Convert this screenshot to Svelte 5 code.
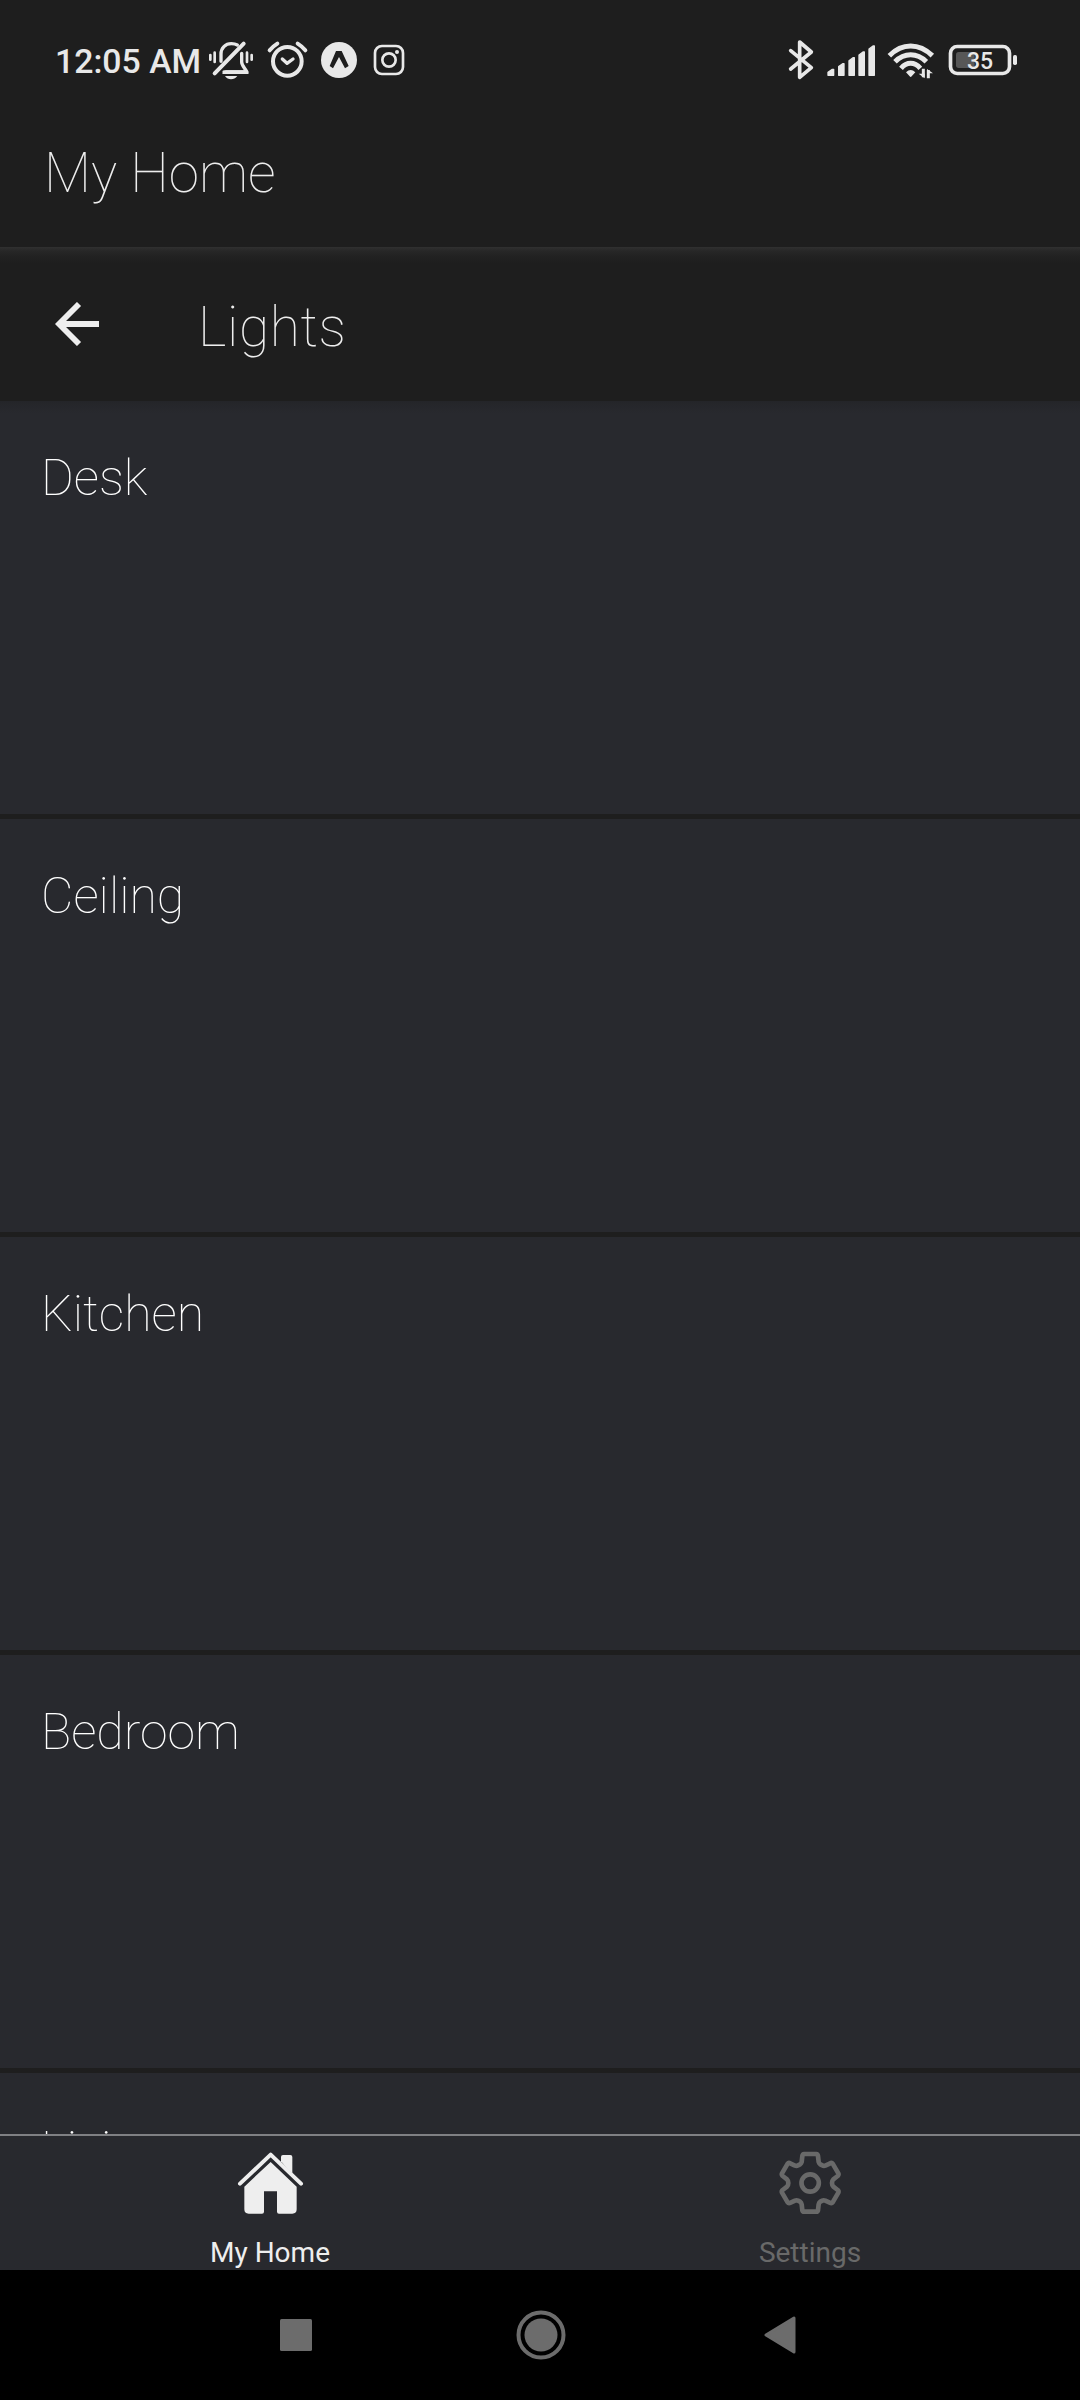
<script>
  const rooms = ['Desk', 'Ceiling', 'Kitchen', 'Bedroom', 'Living'];
</script>

<div class="screen">
  <div class="status">
    <span class="time">12:05 AM</span>
    <svg width="53" height="42" viewBox="501 60 159 126" fill="none" stroke="#e8e8e8" stroke-width="10" stroke-linecap="round">
      <path d="M511 105V119M524 98V126M635 105V119M621 98V126" stroke-width="8" />
      <path d="M524 160L611 71" stroke-width="12" />
      <path d="M543 124V102C543 84 556 71 574 71Q585 71 592 75" />
      <path d="M605 100V126C605 136 613 142 621 156H552" stroke-linejoin="round" />
      <path d="M546 162L557 151H622L626 162Z" fill="#e8e8e8" stroke="none" />
      <path d="M555 168H592Q584 178 573 178Q562 178 555 168Z" fill="#e8e8e8" stroke="none" />
    </svg>
    <svg width="54" height="42" viewBox="660 60 162 126" fill="none" stroke="#e8e8e8" stroke-width="12" stroke-linecap="round" stroke-linejoin="round">
      <circle cx="742" cy="124" r="43" />
      <path d="M727 117L741 130L759 117" stroke-width="10" />
      <path d="M689 91Q699 79 712 71M773 71Q786 79 796 91" />
    </svg>
    <svg width="50" height="42" viewBox="822 60 150 126" fill="none">
      <circle cx="897" cy="120" r="54" fill="#e8e8e8" />
      <path d="M888 93H905L926 138L915 145L897 111L879 145L869 138Z" fill="#1e1e1e" />
    </svg>
    <svg width="50" height="42" viewBox="972 60 150 126" fill="none" stroke="#e8e8e8">
      <rect x="1005" y="78" width="84" height="84" rx="21" stroke-width="8" />
      <circle cx="1047" cy="120" r="20" stroke-width="8" />
      <circle cx="1071" cy="96" r="6" fill="#e8e8e8" stroke="none" />
    </svg>
    <span class="spacer"></span>
    <svg width="35" height="42" viewBox="45 60 105 126" fill="none" stroke="#e8e8e8" stroke-width="11" stroke-linecap="round" stroke-linejoin="round">
      <path d="M62 92L124 143L89 172V66L124 96L62 147" />
    </svg>
    <svg width="60" height="42" viewBox="150 60 180 126" fill="#e8e8e8" stroke="#e8e8e8" stroke-width="4" stroke-linejoin="round">
      <path d="M174 166V157L187 148H191V166ZM206 166V140L219 131H222V166ZM237 166V122L249 113H253V166ZM267 166V105L279 96H283V166ZM297 166V87L309 78H313V166Z" />
    </svg>
    <svg width="60" height="42" viewBox="330 60 180 126" fill="none" stroke="#e8e8e8" stroke-width="15">
      <path d="M358 107Q387 78 422 78T487 107M375 125Q396 104 422 104T469 125M393 145Q406 130 422 130T451 145" />
      <path d="M408 157Q422 143 436 157L425 169Q422 173 419 169Z" fill="#e8e8e8" stroke="none" />
      <path d="M460 146V172M475 175V150" stroke-width="9" />
      <path d="M446 161L464 175V161ZM471 147V160H489Z" fill="#e8e8e8" stroke="none" />
    </svg>
    <svg width="80" height="42" viewBox="510 60 240 126">
      <rect x="541.500" y="79.500" width="177" height="81" rx="20" fill="none" stroke="#e8e8e8" stroke-width="11" />
      <path d="M566 96H614V144H566Q558 144 558 136V104Q558 96 566 96Z" fill="#575757" />
      <rect x="729" y="105" width="12" height="30" rx="5" fill="#e8e8e8" />
      <text class="charge" x="630" y="147" text-anchor="middle">35</text>
    </svg>
  </div>

  <header class="title">My Home</header>

  <div class="subheader">
    <svg width="44" height="44" viewBox="0 0 44 44" fill="none" stroke="#eee" stroke-width="5.800">
      <path d="M44 22H5M24 2L4 22L24 42" />
    </svg>
    <span>Lights</span>
  </div>

  <main class="rooms">
    {#each rooms as room}
      <section class="room">{room}</section>
    {/each}
  </main>

  <nav class="tabs">
    <div class="tab active">
      <svg width="68" height="64" viewBox="708 300 204 192">
        <path d="M720 401L812 314L903 401" fill="none" stroke="#eee" stroke-width="12" stroke-linecap="round" stroke-linejoin="round" />
        <path d="M843 334V321Q843 315 849 315H871Q877 315 877 321V369L865 360Z" fill="#eee" />
        <path d="M812 336L890 410V478Q890 491 877 491H837Q831 491 831 485V424H792V485Q792 491 786 491H746Q733 491 733 478V410Z" fill="#eee" />
      </svg>
      <span>My Home</span>
    </div>
    <div class="tab">
      <svg width="64" height="64" viewBox="235 120 192 192" fill="none" stroke="#696969" stroke-width="14" stroke-linejoin="round">
        <circle cx="331.500" cy="219" r="26" />
        <path d="M313 132H350Q354 132 355 138L357 156Q358 160 362 163L368 166Q372 169 377 167L390 161Q396 157 399 161L416 190Q418 194 414 198L401 208Q397 212 397 219T401 230L414 240Q418 244 416 248L399 277Q396 281 390 278L377 272Q372 270 368 272L362 275Q358 278 357 283L355 301Q354 305 350 305H313Q309 305 308 301L306 283Q305 278 301 275L295 272Q291 270 286 272L273 278Q267 281 264 277L247 248Q245 244 249 240L262 230Q266 226 266 219T262 208L249 198Q245 194 247 190L264 161Q267 157 273 161L286 167Q291 169 295 166L301 163Q305 160 306 156L308 138Q309 132 313 132Z" />
      </svg>
      <span>Settings</span>
    </div>
  </nav>

  <footer class="system">
    <svg width="32" height="50" viewBox="0 0 32 50"><rect y="9" width="32" height="32" rx="1.500" fill="#6c6c6c" /></svg>
    <svg width="50" height="50" viewBox="0 0 50 50">
      <circle cx="25" cy="25" r="22.500" fill="none" stroke="#6c6c6c" stroke-width="4" />
      <circle cx="25" cy="25" r="16.500" fill="#6c6c6c" />
    </svg>
    <svg width="32" height="50" viewBox="0 0 32 50"><path d="M2 25L30 8V42Z" fill="#6c6c6c" stroke="#6c6c6c" stroke-width="3" stroke-linejoin="round" /></svg>
  </footer>
</div>

<style>
  :global(body) {
    margin: 0;
    background: #000;
  }
  .screen {
    width: 1080px;
    height: 2400px;
    display: flex;
    flex-direction: column;
    overflow: hidden;
    background: #1e1e1e;
    color: #eee;
    font-family: Roboto, sans-serif;
  }
  svg {
    display: block;
    flex: none;
  }
  .status {
    flex: none;
    height: 122px;
    box-sizing: border-box;
    padding: 0 60px 0 55px;
    display: flex;
    align-items: center;
  }
  .time {
    width: 152px;
    font-size: 33.8px;
    font-weight: 500;
    white-space: nowrap;
    color: #e8e8e8;
  }
  .spacer {
    flex: 1;
  }
  .charge {
    font-size: 69px;
    font-weight: 500;
    fill: #e8e8e8;
  }
  .title {
    flex: none;
    height: 125px;
    box-sizing: border-box;
    padding: 18px 44px 0;
    font-size: 54.8px;
    line-height: 66px;
    font-weight: 100;
  }
  .subheader {
    flex: none;
    height: 154px;
    box-sizing: border-box;
    padding: 0 55px;
    display: flex;
    align-items: center;
    gap: 99px;
    background: linear-gradient(#303030 0, #272727 4px, #212121 10px, #1e1e1e 17px);
    font-size: 55px;
    font-weight: 100;
    letter-spacing: 0.6px;
  }
  .subheader span {
    padding-top: 6px;
  }
  .rooms {
    flex: 1;
    min-height: 0;
    overflow: hidden;
    background: linear-gradient(#242529 0, #28292e 12px);
  }
  .room {
    height: 418px;
    box-sizing: border-box;
    padding: 47px 41px 0;
    border-bottom: 5px solid #1e1e1e;
    font-size: 50px;
    line-height: 60px;
    font-weight: 100;
    color: #fff;
  }
  .tabs {
    flex: none;
    height: 136px;
    box-sizing: border-box;
    border-top: 2px solid #7f8083;
    display: flex;
    background: #28292e;
  }
  .tab {
    flex: 1;
    display: flex;
    flex-direction: column;
    align-items: center;
    padding-top: 14px;
    gap: 23px;
    color: #696969;
    font-size: 28px;
    line-height: 32px;
  }
  .active {
    color: #eee;
  }
  .system {
    flex: none;
    height: 130px;
    box-sizing: border-box;
    padding: 0 284px 0 280px;
    display: grid;
    grid-template-columns: 32px 1fr 32px;
    align-items: center;
    background: #000;
  }
  .system svg:nth-child(2) {
    justify-self: center;
    margin-left: 5px;
  }
</style>
